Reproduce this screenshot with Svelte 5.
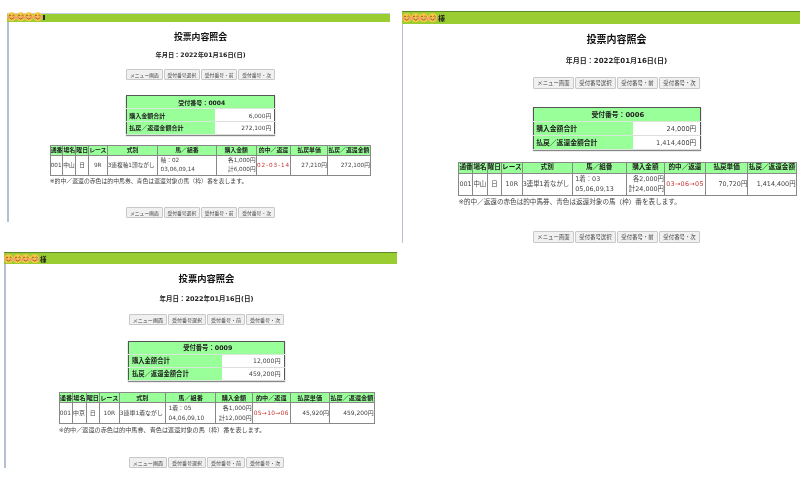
<script>
    const buttons = ["メニュー画面", "受付番号選択", "受付番号・前", "受付番号・次"];
    const heads = ["通番", "場名", "曜日", "レース", "式別", "馬／組番", "購入金額", "的中／返還", "払戻単価", "払戻／返還金額"];

    const panels = [
        {
            cls: "a", name: "", no: "0004", buy: "6,000円", back: "272,100円",
            cols: [12.7, 13, 12.6, 18.7, 50.7, 58.3, 40, 34.7, 36.6, 43],
            race: ["中山", "9R", "3連複軸1頭ながし"],
            horse: ["軸：02", "03,06,09,14"], price: ["各1,000円", "計6,000円"],
            hit: "02-03-14", unit: "27,210円", total: "272,100円"
        },
        {
            cls: "b", name: "様", no: "0006", buy: "24,000円", back: "1,414,400円",
            cols: [14, 14.3, 14.3, 20.7, 50, 54, 38.3, 41, 42.3, 48.3],
            race: ["中山", "10R", "3連単1着ながし"],
            horse: ["1着：03", "05,06,09,13"], price: ["各2,000円", "計24,000円"],
            hit: "03→06→05", unit: "70,720円", total: "1,414,400円"
        },
        {
            cls: "c", name: "様", no: "0009", buy: "12,000円", back: "459,200円",
            cols: [13.3, 13.7, 13, 20, 46.3, 50, 36.7, 38, 39.3, 44.7],
            race: ["中京", "10R", "3連単1着ながし"],
            horse: ["1着：05", "04,06,09,10"], price: ["各1,000円", "計12,000円"],
            hit: "05→10→06", unit: "45,920円", total: "459,200円"
        }
    ];

    const sum = (list) => list.reduce((a, b) => a + b, 0);
</script>

{#snippet buttonRow()}
    <div class="btns">
        {#each buttons as b}
            <button type="button">{b}</button>
        {/each}
    </div>
{/snippet}

<div class="desk">
    {#each panels as p}
        <section class="panel {p.cls}">
            <div class="bar">
                {#each [0, 1, 2, 3] as i}
                    <svg class="face" viewBox="0 0 20 20" data-i={i}>
                        <circle cx="10" cy="10" r="9.6" fill="#f8c544" />
                        <circle cx="4.2" cy="11.5" r="3" fill="#f59a78" />
                        <circle cx="15.8" cy="11.5" r="3" fill="#f59a78" />
                        <path d="M4 8 Q6.3 4.5 8.6 8 M11.4 8 Q13.7 4.5 16 8" fill="none" stroke="#6b4414" stroke-width="1.6" />
                        <path d="M6 12.5 Q10 17.5 14 12.5" fill="none" stroke="#6b4414" stroke-width="1.6" />
                    </svg>
                {/each}
                <span class="sama">{p.name}</span>
            </div>

            <div class="body">
                <h1>投票内容照会</h1>
                <p class="date">年月日：2022年01月16日(日)</p>
                {@render buttonRow()}

                <table class="sum">
                    <tbody>
                        <tr><th colspan="2" class="mid">受付番号：{p.no}</th></tr>
                        <tr><th>購入金額合計</th><td>{p.buy}</td></tr>
                        <tr><th>払戻／返還金額合計</th><td>{p.back}</td></tr>
                    </tbody>
                </table>

                <div class="detail">
                    <table class="list" style="width:{sum(p.cols)}px">
                        <colgroup>
                            {#each p.cols as w}
                                <col style="width:{w}px" />
                            {/each}
                        </colgroup>
                        <thead>
                            <tr>
                                {#each heads as h}
                                    <th>{h}</th>
                                {/each}
                            </tr>
                        </thead>
                        <tbody>
                            <tr>
                                <td>001</td>
                                <td>{p.race[0]}</td>
                                <td class="c">日</td>
                                <td class="c">{p.race[1]}</td>
                                <td>{p.race[2]}</td>
                                <td class="two">{p.horse[0]}<br />{p.horse[1]}</td>
                                <td class="two r">{p.price[0]}<br />{p.price[1]}</td>
                                <td class="hit">{p.hit}</td>
                                <td class="r">{p.unit}</td>
                                <td class="r">{p.total}</td>
                            </tr>
                        </tbody>
                    </table>
                    <p class="note">※的中／返還の赤色は的中馬券、青色は返還対象の馬（枠）番を表します。</p>
                </div>

                <div class="lower">
                    {@render buttonRow()}
                </div>
            </div>
        </section>
    {/each}
</div>

<style>
    :global(body) {
        background: #fff;
    }

    .desk {
        position: relative;
        width: 800px;
        height: 480px;
        overflow: hidden;
        font-family: "DejaVu Sans", "Noto Sans CJK JP", sans-serif;
        color: #222;
        filter: blur(0.35px);
    }

    /* three screenshots pasted on one canvas */
    .panel {
        position: absolute;
        box-sizing: border-box;
    }
    .a {
        left: 7px;
        top: 13px;
        width: 383px;
        font-size: 8.9px;
    }
    .b {
        left: 402px;
        top: 11px;
        width: 398px;
        font-size: 10px;
    }
    .c {
        left: 4px;
        top: 252px;
        width: 393px;
        font-size: 9.3px;
    }

    .bar {
        display: flex;
        align-items: center;
        height: 1.3em;
        background: #9acd32;
        border-top: 1px solid #5f8a2a;
        box-sizing: border-box;
    }
    .a .bar {
        height: 8.7px;
        border-top-color: #c3cfe0;
    }
    .face {
        width: 9.5px;
        height: 9.5px;
        margin-right: -1px;
        flex: none;
    }
    .a .face {
        margin-top: -2px;
    }
    .sama {
        margin-left: 2px;
        font-size: 0.7em;
        font-weight: bold;
        color: #222;
    }
    .a .sama {
        width: 2px;
        height: 5px;
        background: #2a2a2a;
    }

    .body {
        display: flex;
        flex-direction: column;
        align-items: center;
        border-left: 2px solid #b4c0d2;
        height: 21.9em;
        box-sizing: border-box;
    }
    .a .body {
        padding-left: 2px;
        height: 200px;
    }
    .b .body {
        padding-left: 30px;
        border-left-width: 1px;
    }
    .c .body {
        padding-left: 10px;
    }

    h1 {
        margin: 0.85em 0 0;
        font-size: 1em;
        line-height: 1.4em;
        font-weight: bold;
        color: #111;
    }
    .a h1 {
        margin-top: 1.05em;
    }
    .date {
        margin: 1.5em 0 0;
        font-size: 0.7em;
        line-height: 1.4em;
        font-weight: bold;
        color: #222;
    }
    .a .date {
        margin-top: 1.25em;
    }

    .btns {
        display: flex;
        gap: 0.1em;
        margin-top: 1.05em;
    }
    button {
        font: inherit;
        font-size: 0.54em;
        width: 7.6em;
        height: 2.2em;
        padding: 0;
        box-sizing: border-box;
        background: #f0f0f0;
        border: 1px solid #c8c8c8;
        border-radius: 1px;
        color: #444;
        display: flex;
        align-items: center;
        justify-content: center;
        white-space: nowrap;
    }

    .sum {
        margin-top: 1.75em;
        width: 16.8em;
        height: 4.4em;
        border-collapse: collapse;
        border: 1px solid #555;
        box-shadow: 0 1px 1px #888;
    }
    .sum th {
        background: #99ff99;
        font-size: 0.68em;
        text-align: left;
        padding: 0 0 0 0.4em;
        width: 60%;
        border-bottom: 1px solid #d8e8d8;
        color: #222;
    }
    .sum th.mid {
        text-align: center;
    }
    .sum td {
        font-size: 0.66em;
        text-align: right;
        padding: 0 0.5em 0 0;
        border-bottom: 1px solid #ddd;
        color: #444;
    }

    .detail {
        margin-top: 1.2em;
        margin-left: 2.2em;
    }
    .list {
        table-layout: fixed;
        border-collapse: collapse;
        border: 1px solid #888;
    }
    .list th {
        height: 1.5em;
        background: #99ff99;
        font-size: 0.66em;
        line-height: 1;
        padding: 0;
        border: 1px solid #888;
        white-space: nowrap;
        overflow: hidden;
        color: #222;
    }
    .list td {
        height: 2.2em;
        font-size: 0.64em;
        line-height: 1.65;
        padding: 0;
        border: 1px solid #888;
        color: #444;
        white-space: nowrap;
        overflow: hidden;
    }
    .list td.c {
        text-align: center;
    }
    .list td.r {
        text-align: right;
    }
    .list td.two:not(.r) {
        padding-left: 0.4em;
    }
    .list td.hit {
        color: #c8322f;
        text-align: center;
        letter-spacing: 0.05em;
    }
    .a .list td.hit {
        letter-spacing: 0.16em;
    }
    .note {
        margin: 0.35em 0 0;
        font-size: 0.66em;
        line-height: 1.3;
        color: #444;
    }

    .lower {
        margin-top: 1.4em;
    }
</style>
